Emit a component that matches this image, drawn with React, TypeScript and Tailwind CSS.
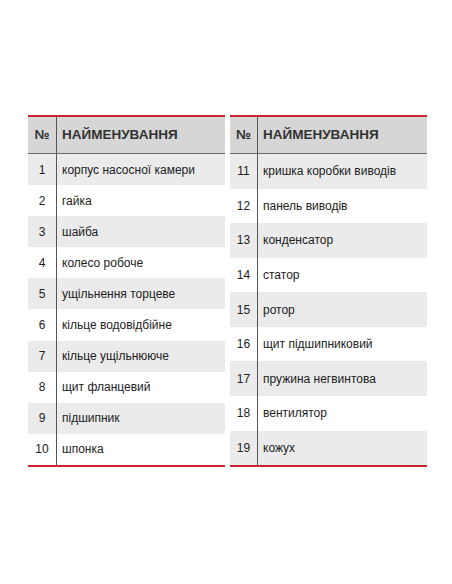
import React from "react";

const left: [string, string][] = [
  ["1", "корпус насосної камери"],
  ["2", "гайка"],
  ["3", "шайба"],
  ["4", "колесо робоче"],
  ["5", "ущільнення торцеве"],
  ["6", "кільце водовідбійне"],
  ["7", "кільце ущільнююче"],
  ["8", "щит фланцевий"],
  ["9", "підшипник"],
  ["10", "шпонка"],
];

const right: [string, string][] = [
  ["11", "кришка коробки виводів"],
  ["12", "панель виводів"],
  ["13", "конденсатор"],
  ["14", "статор"],
  ["15", "ротор"],
  ["16", "щит підшипниковий"],
  ["17", "пружина негвинтова"],
  ["18", "вентилятор"],
  ["19", "кожух"],
];

function Table({ rows, numW }: { rows: [string, string][]; numW: string }) {
  return (
    <div className="w-[197px] flex flex-col">
      <div className="flex h-[39px] border-t-2 border-[#c8262e] border-b border-b-[#6a6a6a] bg-[#d6d6d6]">
        <div
          className={`${numW} flex items-center justify-center border-r border-[#555] text-[13.5px] font-bold text-[#333]`}
        >
          №
        </div>
        <div className="flex-1 flex items-center pl-[5px] text-[13.5px] font-bold text-[#333]">
          НАЙМЕНУВАННЯ
        </div>
      </div>
      <div className="flex flex-col h-[311px]">
        {rows.map(([n, t], i) => (
          <div
            key={n}
            className={`flex flex-1 ${i % 2 === 0 ? "bg-[#ebebeb]" : "bg-white"}`}
          >
            <div
              className={`${numW} flex items-center justify-center border-r border-[#555] text-[12px] text-[#222]`}
            >
              {n}
            </div>
            <div className="flex-1 flex items-center pl-[5px] text-[12px] text-[#222]">
              {t}
            </div>
          </div>
        ))}
      </div>
      <div className="h-[2px] bg-[#c8262e]" />
    </div>
  );
}

export default function App() {
  return (
    <div
      className="w-[452px] h-[584px] bg-white pt-[115px] pl-[28px] flex gap-[5px] items-start"
      style={{ fontFamily: '"Liberation Sans", Arial, sans-serif' }}
    >
      <Table rows={left} numW="w-[29px]" />
      <Table rows={right} numW="w-[28px]" />
    </div>
  );
}
